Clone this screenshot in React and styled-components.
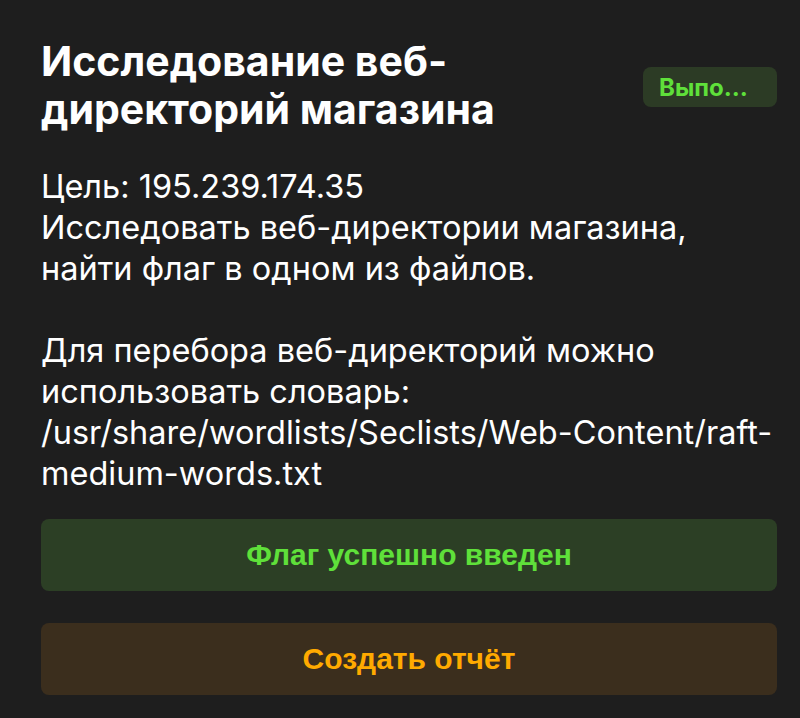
import React from 'react'
import styled, { createGlobalStyle } from 'styled-components'

const GlobalStyle = createGlobalStyle`
  html, body {
    margin: 0;
    padding: 0;
    background: #1e1e1e;
  }
  body {
    font-family: Inter, "Noto Sans", sans-serif;
    color: #ffffff;
  }
`

const Card = styled.div`
  box-sizing: border-box;
  width: 800px;
  min-height: 718px;
  padding: 37px 23px 23px 41px;
  background: #1e1e1e;
`

const Header = styled.div`
  display: flex;
  align-items: flex-start;
  justify-content: space-between;
  gap: 24px;
`

const Title = styled.h2`
  margin: 0;
  max-width: 520px;
  font-size: 41px;
  line-height: 48px;
  font-weight: 700;
  color: #ffffff;
`

const Badge = styled.span`
  flex: none;
  box-sizing: border-box;
  width: 134px;
  height: 40px;
  margin-top: 30px;
  padding: 0 16px;
  display: flex;
  align-items: center;
  border-radius: 8px;
  background: #2c3b25;
  color: #5fe03a;
  font-size: 24px;
  font-weight: 700;
  white-space: nowrap;
  overflow: hidden;

  > span {
    overflow: hidden;
    text-overflow: ellipsis;
  }
`

const Description = styled.p`
  margin: 33px 0 0;
  font-size: 32.5px;
  line-height: 41px;
  white-space: pre-line;
`

const Actions = styled.div`
  display: flex;
  flex-direction: column;
  gap: 32px;
  margin-top: 25px;
`

const ActionButton = styled.button`
  height: 72px;
  width: 100%;
  border: none;
  border-radius: 8px;
  background: ${props => props.$bg};
  color: ${props => props.$color};
  font-family: "Liberation Sans", Arial, sans-serif;
  font-size: 30px;
  font-weight: 700;
  cursor: pointer;
`

const App = () =>
  <>
    <GlobalStyle />
    <Card>
      <Header>
        <Title>Исследование веб-директорий магазина</Title>
        <Badge><span>Выполнено</span></Badge>
      </Header>
      <Description>
        {'Цель: 195.239.174.35\nИсследовать веб-директории магазина, найти флаг в одном из файлов.\n\nДля перебора веб-директорий можно использовать словарь: /usr/share/wordlists/Seclists/Web-Content/raft-medium-words.txt'}
      </Description>
      <Actions>
        <ActionButton $bg="#2c3f25" $color="#5fe03a">Флаг успешно введен</ActionButton>
        <ActionButton $bg="#3b2e1d" $color="#ffaa00">Создать отчёт</ActionButton>
      </Actions>
    </Card>
  </>

export default App
